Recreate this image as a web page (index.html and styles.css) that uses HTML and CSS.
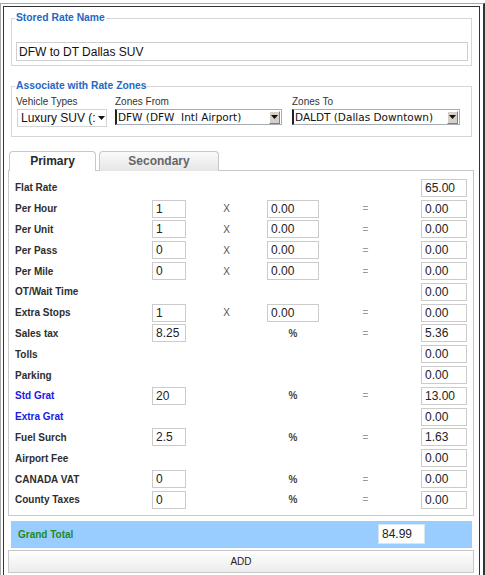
FILE: index.html
```html
<!DOCTYPE html>
<html>
<head>
<meta charset="utf-8">
<title>Stored Rate</title>
<link rel="stylesheet" href="styles.css">
</head>
<body>
<div class="frame">
  <div class="dialog">
    <fieldset class="box box-name">
      <legend>Stored Rate Name</legend>
      <input class="name-input" type="text" value="DFW to DT Dallas SUV">
    </fieldset>

    <fieldset class="box box-zones">
      <legend>Associate with Rate Zones</legend>
      <div class="zones">
        <div class="zone zone-vehicle">
          <span class="zone-label">Vehicle Types</span>
          <div class="select-modern">
            <span class="sel-text">Luxury SUV (:</span>
            <svg class="caret" width="7" height="4" viewBox="0 0 7 4"><polygon points="0,0 7,0 3.5,4" fill="#111"/></svg>
          </div>
        </div>
        <div class="zone zone-from">
          <span class="zone-label">Zones From</span>
          <div class="select-classic">
            <span class="sel-text">DFW (DFW&nbsp; Intl Airport)</span>
            <span class="sel-btn"><svg width="7" height="4" viewBox="0 0 7 4"><polygon points="0,0 7,0 3.5,4" fill="#111"/></svg></span>
          </div>
        </div>
        <div class="zone zone-to">
          <span class="zone-label">Zones To</span>
          <div class="select-classic">
            <span class="sel-text">DALDT (Dallas Downtown)</span>
            <span class="sel-btn"><svg width="7" height="4" viewBox="0 0 7 4"><polygon points="0,0 7,0 3.5,4" fill="#111"/></svg></span>
          </div>
        </div>
      </div>
    </fieldset>

    <div class="tabs">
      <div class="tab tab-active">Primary</div>
      <div class="tab">Secondary</div>
    </div>

    <div class="tab-panel">
      <div class="row"><span class="lbl">Flat Rate</span><input class="in-t" value="65.00"></div>
      <div class="row"><span class="lbl">Per Hour</span><input class="in-a" value="1"><span class="op">X</span><input class="in-b" value="0.00"><span class="eq">=</span><input class="in-t" value="0.00"></div>
      <div class="row"><span class="lbl">Per Unit</span><input class="in-a" value="1"><span class="op">X</span><input class="in-b" value="0.00"><span class="eq">=</span><input class="in-t" value="0.00"></div>
      <div class="row"><span class="lbl">Per Pass</span><input class="in-a" value="0"><span class="op">X</span><input class="in-b" value="0.00"><span class="eq">=</span><input class="in-t" value="0.00"></div>
      <div class="row"><span class="lbl">Per Mile</span><input class="in-a" value="0"><span class="op">X</span><input class="in-b" value="0.00"><span class="eq">=</span><input class="in-t" value="0.00"></div>
      <div class="row"><span class="lbl">OT/Wait Time</span><input class="in-t" value="0.00"></div>
      <div class="row"><span class="lbl">Extra Stops</span><input class="in-a" value="1"><span class="op">X</span><input class="in-b" value="0.00"><span class="eq">=</span><input class="in-t" value="0.00"></div>
      <div class="row"><span class="lbl">Sales tax</span><input class="in-a" value="8.25"><span class="pct">%</span><span class="eq">=</span><input class="in-t" value="5.36"></div>
      <div class="row"><span class="lbl">Tolls</span><input class="in-t" value="0.00"></div>
      <div class="row"><span class="lbl">Parking</span><input class="in-t" value="0.00"></div>
      <div class="row"><span class="lbl lbl-blue">Std Grat</span><input class="in-a" value="20"><span class="pct">%</span><span class="eq">=</span><input class="in-t" value="13.00"></div>
      <div class="row"><span class="lbl lbl-blue">Extra Grat</span><input class="in-t" value="0.00"></div>
      <div class="row"><span class="lbl">Fuel Surch</span><input class="in-a" value="2.5"><span class="pct">%</span><span class="eq">=</span><input class="in-t" value="1.63"></div>
      <div class="row"><span class="lbl">Airport Fee</span><input class="in-t" value="0.00"></div>
      <div class="row"><span class="lbl">CANADA VAT</span><input class="in-a" value="0"><span class="pct">%</span><span class="eq">=</span><input class="in-t" value="0.00"></div>
      <div class="row"><span class="lbl">County Taxes</span><input class="in-a" value="0"><span class="pct">%</span><span class="eq">=</span><input class="in-t" value="0.00"></div>
    </div>

    <div class="grand-total">
      <span class="gt-label">Grand Total</span>
      <input class="gt-input" value="84.99">
    </div>

    <button class="add-btn" type="button">ADD</button>
  </div>
</div>
</body>
</html>
```

FILE: styles.css
```css
* { box-sizing: border-box; }

html, body {
  margin: 0;
  padding: 0;
  background: #fff;
}

body {
  width: 485px;
  height: 575px;
  overflow: hidden;
  font-family: "Liberation Sans", Arial, sans-serif;
  color: #333;
}

.frame {
  margin-top: 3px;
  border-top: 1px solid #a8a8a8;
  border-left: 1px solid #a8a8a8;
  border-right: 2px solid #333;
  height: 572px;
  padding: 2px 3px 0 2px;
  overflow: hidden;
}

.dialog {
  border: 1px solid #333;
  border-bottom: none;
  height: 569px;
  padding: 0 7px;
  overflow: hidden;
}

/* fieldsets */
.box {
  margin: 0;
  border: 1px solid #d6d6d6;
  min-width: 0;
}

.box legend {
  font-size: 10.3px;
  line-height: 12px;
  font-weight: bold;
  color: #2468c4;
  padding: 0 1px;
  margin-left: -1px;
}

.box-name {
  margin-top: 5px;
  padding: 18px 3px 4px 4px;
}

.name-input {
  display: block;
  width: 452px;
  height: 19px;
  margin: 0;
  border: 1px solid #cfcfcf;
  padding: 0 2px;
  font-family: "Liberation Sans", Arial, sans-serif;
  font-size: 12px;
  color: #111;
  background: #fff;
}

.box-zones {
  margin-top: 14px;
  padding: 4px 3px 9px 4px;
}

.zones {
  display: flex;
  align-items: flex-start;
}

.zone {
  display: flex;
  flex-direction: column;
}

.zone-vehicle { width: 91px; margin-right: 8px; }
.zone-from { width: 167px; margin-right: 10px; }
.zone-to { width: 168px; }

.zone-label {
  font-size: 10px;
  line-height: 12px;
  color: #333;
}

.select-modern {
  margin-top: 1px;
  margin-left: 1px;
  width: 90px;
  height: 18px;
  border: 1px solid #d4d4d4;
  background: #fff;
  display: flex;
  align-items: center;
  padding-left: 3px;
}

.select-modern .sel-text {
  font-size: 12px;
  color: #111;
  white-space: nowrap;
  overflow: hidden;
  width: 74px;
}

.select-modern .caret {
  margin-left: 3px;
}

.select-classic {
  margin-top: 1px;
  height: 16px;
  border: 1px solid #a5acb5;
  border-left: 2px solid #222;
  background: #fff;
  display: flex;
  align-items: center;
  justify-content: space-between;
  padding-left: 1px;
}

.select-classic .sel-text {
  font-family: "DejaVu Sans", Verdana, sans-serif;
  font-size: 10.5px;
  color: #111;
  white-space: nowrap;
}

.sel-btn {
  width: 11px;
  height: 13px;
  margin-right: 1px;
  background: #d4d0c8;
  border: 1px solid;
  border-color: #fff #808080 #808080 #fff;
  display: flex;
  align-items: center;
  justify-content: center;
}

/* tabs */
.tabs {
  display: flex;
  margin-top: 14px;
  margin-left: -2px;
  gap: 3px;
  height: 19px;
  position: relative;
  z-index: 1;
}

.tab {
  height: 20px;
  border: 1px solid #c8c8c8;
  border-bottom: none;
  border-radius: 4px 4px 0 0;
  font-size: 12px;
  font-weight: bold;
  line-height: 19px;
  text-align: center;
  color: #666;
  background: linear-gradient(#fafafa, #e6e6e6);
  width: 120px;
}

.tab-active {
  width: 87px;
  color: #2a2a2a;
  background: #fff;
}

.tab-panel {
  margin: 0 -2px 0 -3px;
  border: 1px solid #c8c8c8;
  padding: 6.5px 0 4.5px 0;
}

.row {
  display: grid;
  grid-template-columns: 143px 34px 81px 52px 93px 9px 46px;
  height: 20.8px;
  align-items: center;
}

.row input {
  height: 18px;
  margin: 0;
  border: 1px solid #cbcbcb;
  padding: 0 3px;
  font-family: "Liberation Sans", Arial, sans-serif;
  font-size: 12px;
  color: #222;
  background: #fff;
  width: 100%;
}

.lbl {
  grid-column: 1;
  padding-left: 6px;
  font-size: 10px;
  font-weight: bold;
  color: #2e2e2e;
  white-space: nowrap;
}

.lbl-blue { color: #1a1ae6; }

.in-a { grid-column: 2; }
.op {
  grid-column: 3;
  text-align: center;
  font-size: 10px;
  color: #555;
}
.in-b { grid-column: 4; }
.pct {
  grid-column: 4;
  text-align: center;
  font-size: 10px;
  font-weight: bold;
  color: #444;
}
.eq {
  grid-column: 5;
  text-align: center;
  font-size: 10px;
  color: #999;
}
.in-t { grid-column: 7; }

/* grand total */
.grand-total {
  margin-top: 5px;
  height: 27px;
  background: #99ccff;
  display: flex;
  align-items: center;
  padding-left: 7px;
}

.gt-label {
  font-size: 10px;
  font-weight: bold;
  color: #1f8a1f;
  width: 360px;
}

.gt-input {
  width: 47px;
  height: 20px;
  margin: 0;
  border: 1px solid #d8e6f4;
  padding: 0 3px;
  font-family: "Liberation Sans", Arial, sans-serif;
  font-size: 12px;
  color: #222;
  background: #fff;
}

.add-btn {
  display: block;
  margin: 2px -2px 0 -3px;
  width: calc(100% + 5px);
  height: 23px;
  border: 1px solid #c8c8c8;
  background: linear-gradient(#ffffff, #ececec);
  font-family: "Liberation Sans", Arial, sans-serif;
  font-size: 10px;
  color: #222;
  padding: 0;
}
```
